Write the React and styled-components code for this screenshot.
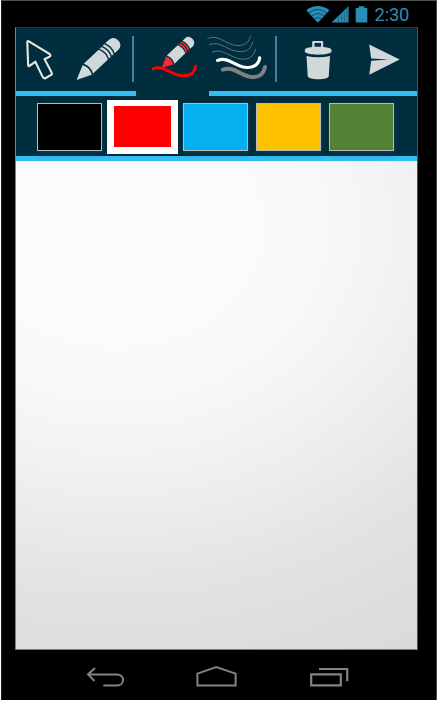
import React from "react";
import styled, { createGlobalStyle } from "styled-components";

const GlobalStyle = createGlobalStyle`
  * { box-sizing: border-box; }
  body { margin: 0; background: #fff; }
  svg { display: block; overflow: visible; flex: none; }
`;

const Phone = styled.main`
  width: 436px;
  height: 700px;
  margin-left: 1px;
  background: #000;
  border-top: 1px solid #555;
  border-right: 1px solid #484848;
  border-left: 1px solid #222;
  display: flex;
  flex-direction: column;
  box-shadow: 0 1px 0 #bcbcbc;
  font-family: Roboto, sans-serif;
`;

const StatusBar = styled.header`
  height: 26px;
  display: flex;
  padding-left: 303px;
  color: #2a8db5;
`;

const Clock = styled.time`
  margin-left: 3.5px;
  font-size: 18.4px;
  line-height: 27px;
  letter-spacing: -0.2px;
`;

const Screen = styled.section`
  width: 403px;
  height: 623px;
  margin-left: 13px;
  border: 1px solid #7b8082;
  border-top-color: #2c3436;
  border-right-color: #4c5052;
  display: flex;
  flex-direction: column;
`;

const Toolbar = styled.nav`
  display: flex;
  height: 68px;
  background: #002e3e;
`;

const ToolGroup = styled.div`
  width: ${(p) => p.$width}px;
  display: flex;
  border-bottom: 5px solid ${(p) => (p.$open ? "transparent" : "#33bdf2")};
`;

const ToolButton = styled.button`
  appearance: none;
  border: 0;
  padding: 0;
  background: none;
  width: ${(p) => p.$width}px;
  height: 63px;
  display: flex;
  flex: none;
`;

const Divider = styled.i`
  width: 1.5px;
  height: 46px;
  margin-top: 8px;
  background: #507ba0;
  flex: none;
`;

const Palette = styled.div`
  height: 65px;
  padding: 4px 0 0 21px;
  display: flex;
  background: #002e3e;
  border-bottom: 5px solid #33bdf2;
`;

const Swatch = styled.button`
  appearance: none;
  width: ${(p) => (p.$selected ? 71 : 65)}px;
  height: ${(p) => (p.$selected ? 54 : 48)}px;
  margin: ${(p) => (p.$selected ? "0 5px 0 -3px" : "3px 8px 0 0")};
  padding: 0;
  flex: none;
  border: 1px solid #b7bbb7;
  background: ${(p) => p.$color};
  box-shadow: 1px 2px 4px #103d50;
  ${(p) =>
    p.$selected &&
    `
    border: solid #fff;
    border-width: 6px 7px 7px;
    box-shadow: none;
  `}
`;

const Canvas = styled.div`
  flex: 1;
  background: radial-gradient(ellipse 600px 495px at 100px 65px,
    #fcfcfc 0%, #fbfbfb 20%, #f8f8f8 35%, #f2f2f2 48%, #ebebeb 60%, #e3e3e3 73%, #dedede 86%, #dadada 100%);
`;

const SystemNav = styled.footer`
  height: 49px;
  display: flex;
  padding-left: 78px;
`;

const NavButton = styled(ToolButton)`
  height: 49px;
`;

function Drawing({ box, children }) {
  const [, , width, height] = box;
  return (
    <svg width={width} height={height} viewBox={box.join(" ")} fill="none" aria-hidden="true">
      {children}
    </svg>
  );
}

function Pencil({ x, y, scaleX = 1, scaleY = 1, accent = "#d0d8da" }) {
  return (
    <g transform={`translate(${x} ${y}) rotate(-43.5) scale(${scaleX} ${scaleY})`} fill="#d0d8da">
      <path fill={accent} d="M0 0 14.5-6.6C17-3.4 17 3.4 14.5 6.6Z" />
      <path d="M16.3-6.8H36.8Q40 0 36.8 6.8H16.3Q20 0 16.3-6.8Z" />
      <path fill={accent} d="M38.2-6.8H40.6Q43.8 0 40.6 6.8H38.2Q41.4 0 38.2-6.8Z" />
      <path fill={accent} d="M42.1-6.8H44.5Q47.7 0 44.5 6.8H42.1Q45.3 0 42.1-6.8Z" />
      <path d="M46-6.8H51.5C59.5-6.8 59.5 6.8 51.5 6.8H46Q49.2 0 46-6.8Z" />
    </g>
  );
}

const swatches = ["#000", "#f00", "#05b0f0", "#ffc000", "#548235"];

export default function App() {
  return (
    <>
      <GlobalStyle />
      <Phone>
        <StatusBar>
          <Drawing box={[305, 1, 66, 26]}>
            <path fill="#2a8db5" d="M306.3 10.2Q317.8 2 329.4 10.2L317.9 22.8Z" />
            <g stroke="#08435c" strokeWidth=".9">
              <path d="M308.8 13.2Q317.8 5.8 327 13.2M311.5 16.1Q317.8 11 324.3 16.1M314.3 19Q317.8 16 321.5 19" />
            </g>
            <path fill="#2a8db5" d="M331.5 22.6 348.6 6.3V22.6Z" />
            <path stroke="#17617f" strokeWidth=".8" d="M338.3 16V22.6M341.3 13.5V22.6M344.3 10.5V22.6M347 8V22.6" />
            <path fill="#2a8db5" d="M355.7 8H358.6V6.2H364.4V8H367.3V22.4H355.7Z" />
          </Drawing>
          <Clock>2:30</Clock>
        </StatusBar>
        <Screen>
          <Toolbar>
            <ToolGroup $width={120}>
              <ToolButton $width={52} aria-label="Select">
                <Drawing box={[16, 28, 52, 63]}>
                  <path d="M28.5 41.2Q27.3 40.7 27.3 42.5L28.2 65.4Q28.5 66.5 29.4 65.8L35.4 61.8 42.5 76.6Q43.6 78.8 45.4 78.2L50.6 75.2Q52.5 74.2 51.6 72.6L44.6 59.3 49.9 56.4Q51 55.4 49.8 54.2Z" stroke="#e8e8e2" strokeWidth="2.1" />
                </Drawing>
              </ToolButton>
              <ToolButton $width={64} aria-label="Pencil">
                <Drawing box={[68, 28, 64, 63]}>
                  <Pencil x={76.6} y={79.9} />
                </Drawing>
              </ToolButton>
              <Divider />
            </ToolGroup>
            <ToolGroup $width={73} $open>
              <ToolButton $width={73} aria-label="Colour">
                <Drawing box={[136, 28, 73, 63]}>
                  <path d="M153.3 68.8C158 66.7 163 68 168.5 71C175 75 179.5 75.8 184 75.8C191.5 75.8 195 71 195.5 66.3" stroke="red" strokeWidth="3.1" strokeLinecap="round" />
                  <Pencil x={162} y={67.8} scaleX={0.73} scaleY={0.82} accent="#f22c2f" />
                </Drawing>
              </ToolButton>
            </ToolGroup>
            <ToolGroup $width={208}>
              <ToolButton $width={66} aria-label="Line width">
                <Drawing box={[209, 28, 66, 63]}>
                  <g stroke="#798b91" strokeWidth=".75">
                    <path d="M207.5 38.6C218 33.5 226 45.3 238 45.6C246 45.7 249.5 41 250.5 35.5" />
                    <path d="M209.3 44.8C220 40 228 51.5 240 51.7C248 51.8 251.5 47.5 252.8 42" />
                    <path d="M212.2 52.2C223 47.5 231 59 243 59.2C251 59.2 254.5 54.5 255.5 49" />
                  </g>
                  <path d="M217.5 60.4C229 56 235 67.4 247.5 67.5C255.5 67.4 259 63 259.7 57.8" stroke="#fff" strokeWidth="3.2" strokeLinecap="round" />
                  <path d="M222.8 69.6C235 65.5 241 77 253 77.1C261 77 264 72.5 265 67" stroke="#808080" strokeWidth="4" strokeLinecap="round" />
                </Drawing>
              </ToolButton>
              <Divider />
              <ToolButton $width={74} aria-label="Delete">
                <Drawing box={[276.5, 28, 74, 63]}>
                  <path fill="#d0d8da" fillRule="evenodd" d="M311.7 46.9V42Q311.7 41 312.7 41H321.7Q322.7 41 322.7 42V46.9C328 47.3 331 48.3 331 49.9V51.6C331 55.7 304.3 55.7 304.3 51.6V49.9Q304.3 47.5 311.7 46.9ZM314 46.7H320.5V43.1H314Z" />
                  <path fill="#d0d8da" d="M306 55.9Q317.6 58.6 329.5 55.9L328.3 76C328.1 80.4 307.6 80.4 307.2 76Z" />
                </Drawing>
              </ToolButton>
              <ToolButton $width={66} aria-label="Send">
                <Drawing box={[350.5, 28, 66, 63]}>
                  <path fill="#d0d8da" d="M368.7 44.5 399.2 59.5 368.7 74.8 370.7 60.7 388 59.6 370.7 58.5Z" />
                </Drawing>
              </ToolButton>
            </ToolGroup>
          </Toolbar>
          <Palette>
            {swatches.map((color, i) => (
              <Swatch key={color} $color={color} $selected={i === 1} aria-label={`Colour ${i + 1}`} />
            ))}
          </Palette>
          <Canvas />
        </Screen>
        <SystemNav>
          <NavButton $width={110} aria-label="Back">
            <Drawing box={[80, 650, 110, 49]}>
              <path d="M95 668 88 674.4 94.5 681M88 674.4H117C125 674.4 125 685.4 117 685.4H103.3" stroke="#838383" strokeWidth="2" />
            </Drawing>
          </NavButton>
          <NavButton $width={110} aria-label="Home">
            <Drawing box={[190, 650, 110, 49]}>
              <path d="M197.4 685.4V673.6L216.3 667 235.6 673.6V685.4Z" stroke="#838383" strokeWidth="2" />
            </Drawing>
          </NavButton>
          <NavButton $width={110} aria-label="Recent apps">
            <Drawing box={[300, 650, 110, 49]}>
              <path d="M311.2 674.4H340.8V685.4H311.2ZM319 669H347.2V681.2" stroke="#838383" strokeWidth="2.2" />
            </Drawing>
          </NavButton>
        </SystemNav>
      </Phone>
    </>
  );
}
